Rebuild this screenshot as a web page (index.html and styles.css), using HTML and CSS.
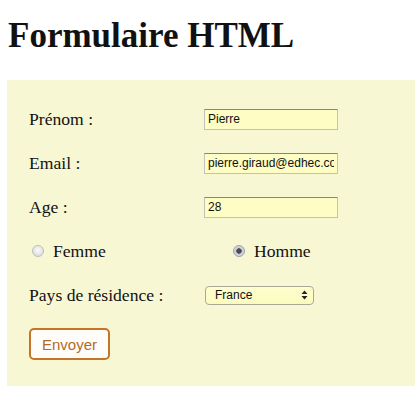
FILE: index.html
```
<!DOCTYPE html>
<html lang="fr">
<head>
<meta charset="utf-8">
<title>Formulaire HTML</title>
<link rel="stylesheet" href="styles.css">
</head>
<body>
<h1 class="title">Formulaire HTML</h1>
<form class="panel">
  <div class="row">
    <label class="lbl" for="prenom">Prénom :</label>
    <input class="field" id="prenom" type="text" value="Pierre">
  </div>
  <div class="row">
    <label class="lbl" for="email">Email :</label>
    <input class="field" id="email" type="text" value="pierre.giraud@edhec.com">
  </div>
  <div class="row">
    <label class="lbl" for="age">Age :</label>
    <input class="field" id="age" type="text" value="28">
  </div>
  <div class="row radios">
    <label class="radio-item"><input class="radio" type="radio" name="sexe"><span>Femme</span></label>
    <label class="radio-item"><input class="radio" type="radio" name="sexe" checked><span>Homme</span></label>
  </div>
  <div class="row">
    <label class="lbl" for="pays">Pays de résidence :</label>
    <span class="select-wrap">
      <select class="select" id="pays"><option>France</option></select>
      <svg class="arrows" width="7" height="10" viewBox="0 0 7 10"><path d="M3.5 0.5 L6.5 4 L0.5 4 Z M3.5 9.5 L6.5 6 L0.5 6 Z" fill="#222"/></svg>
    </span>
  </div>
  <button class="btn" type="button">Envoyer</button>
</form>
</body>
</html>
```
FILE: styles.css
```
html, body {
  margin: 0;
  padding: 0;
  background: #ffffff;
  overflow: hidden;
}
body {
  font-family: "Liberation Serif", "Times New Roman", serif;
  color: #111;
}
.title {
  margin: 16px 0 0 8px;
  font-size: 35px;
  line-height: 40px;
  font-weight: bold;
}
.panel {
  margin: 24px 0 0 7px;
  background: #f7f7d4;
  padding: 17px 22px 27px 22px;
  height: 262px;
  box-sizing: content-box;
}
.row {
  height: 44px;
  display: flex;
  align-items: center;
}
.lbl {
  width: 175px;
  flex-shrink: 0;
  font-size: 17.6px;
}
.field {
  width: 134px;
  height: 21px;
  box-sizing: border-box;
  margin: 0;
  padding: 0 3px;
  border: 1px solid #c2c2b8;
  border-top-color: #85857f;
  background: #fdfdc4;
  font-family: "Liberation Sans", Arial, sans-serif;
  font-size: 12px;
  color: #111;
  outline: none;
}
.radios .radio-item {
  display: flex;
  align-items: center;
  width: 201px;
  flex-shrink: 0;
  font-size: 17.6px;
}
.radio {
  -webkit-appearance: none;
  appearance: none;
  width: 12px;
  height: 12px;
  margin: 0 9px 0 3px;
  border-radius: 50%;
  border: 1px solid #bdbdbd;
  background: radial-gradient(circle at 50% 40%, #fafafa 0%, #e4e4e4 60%, #cfcfcf 100%);
  box-sizing: border-box;
}
.radio:checked {
  border-color: #a0a0a8;
  background: radial-gradient(circle, #4a4a52 0, #4a4a52 2.4px, #c9c9d0 3px, #e3e3e8 100%);
}
.select-wrap {
  position: relative;
  display: inline-block;
  margin-left: 1px;
}
.select {
  -webkit-appearance: none;
  appearance: none;
  width: 109px;
  height: 19px;
  margin: 0;
  padding: 0 0 0 9px;
  box-sizing: border-box;
  border: 1px solid #a9a996;
  border-radius: 4px;
  background: linear-gradient(#fefed0, #fbfbbf);
  font-family: "Liberation Sans", Arial, sans-serif;
  font-size: 12px;
  color: #111;
  display: block;
}
.arrows {
  position: absolute;
  right: 6px;
  top: 4px;
  pointer-events: none;
}
.btn {
  margin-top: 11px;
  width: 81px;
  height: 32px;
  box-sizing: border-box;
  border: 2px solid #c57528;
  border-radius: 5px;
  background: #fffdf9;
  color: #b36a28;
  font-family: "Liberation Sans", Arial, sans-serif;
  font-size: 15px;
  padding: 0;
}
```
